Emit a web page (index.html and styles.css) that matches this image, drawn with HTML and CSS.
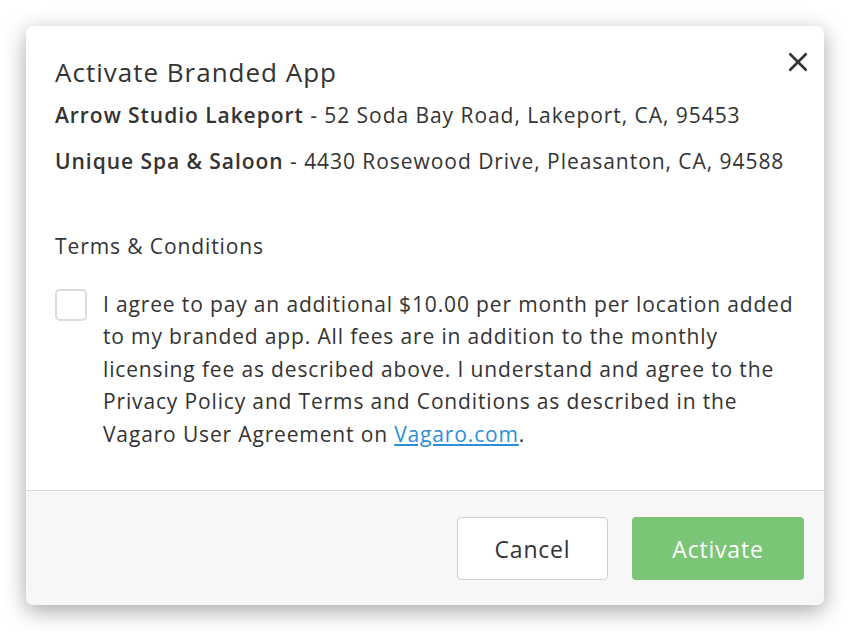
FILE: index.html
```html
<!DOCTYPE html>
<html>
<head>
<meta charset="utf-8">
<link rel="stylesheet" href="styles.css">
</head>
<body>
<div class="dialog">
  <div class="content">
    <div class="header">
      <h1 class="title">Activate Branded App</h1>
      <button class="close" aria-label="Close">
        <svg width="20" height="20" viewBox="0 0 20 20"><path d="M1.5 1.5 L18.5 18.5 M18.5 1.5 L1.5 18.5" stroke="#333" stroke-width="2.6" stroke-linecap="butt" fill="none"/></svg>
      </button>
    </div>
    <p class="loc"><b>Arrow Studio Lakeport</b> - 52 Soda Bay Road, Lakeport, CA, 95453</p>
    <p class="loc"><b>Unique Spa &amp; Saloon</b> - 4430 Rosewood Drive, Pleasanton, CA, 94588</p>
    <h2 class="terms">Terms &amp; Conditions</h2>
    <div class="agree">
      <span class="checkbox"></span>
      <p class="agree-text">I agree to pay an additional $10.00 per month per location added to my branded app. All fees are in addition to the monthly licensing fee as described above. I understand and agree to the Privacy Policy and Terms and Conditions as described in the Vagaro User Agreement on <a href="#">Vagaro.com</a>.</p>
    </div>
  </div>
  <div class="footer">
    <button class="btn btn-cancel">Cancel</button>
    <button class="btn btn-activate">Activate</button>
  </div>
</div>
</body>
</html>
```
FILE: styles.css
```css
html, body {
  margin: 0;
  padding: 0;
  background: #ffffff;
}
body {
  padding: 26px;
  font-family: "Open Sans", Lato, sans-serif;
  color: #333333;
}
.dialog {
  width: 798px;
  height: 579px;
  box-sizing: border-box;
  background: #ffffff;
  border-radius: 7px;
  box-shadow: 0 6px 22px rgba(0, 0, 0, 0.35);
  display: flex;
  flex-direction: column;
  overflow: hidden;
}
.content {
  flex: 1;
  padding: 28px 24px 0 29px;
}
.header {
  display: flex;
  justify-content: space-between;
  align-items: flex-start;
}
.title {
  margin: 0;
  font-size: 26px;
  font-weight: 400;
  letter-spacing: 1px;
  line-height: 36px;
  color: #333;
}
.close {
  border: 0;
  background: none;
  padding: 0;
  margin: -2px -8px 0 0;
  width: 20px;
  height: 20px;
  cursor: pointer;
}
.close svg { display: block; }
.loc {
  margin: 5px 0 0;
  font-size: 21px;
  letter-spacing: 0.95px;
  line-height: 40px;
  color: #333;
}
.loc b { font-weight: 600; }
.loc + .loc { margin-top: 6px; }
.terms {
  margin: 50px 0 0;
  font-size: 21px;
  font-weight: 400;
  letter-spacing: 0.9px;
  line-height: 30px;
  color: #333;
}
.agree {
  display: flex;
  gap: 16px;
  margin-top: 27px;
}
.checkbox {
  flex: none;
  width: 32px;
  height: 32px;
  box-sizing: border-box;
  border: 2px solid #dcdcdc;
  border-radius: 5px;
  margin-top: 1px;
}
.agree-text {
  margin: 0;
  font-size: 21px;
  letter-spacing: 0.85px;
  line-height: 32.4px;
  color: #333;
}
.agree-text a {
  color: #2c8fd8;
  text-decoration: underline;
}
.footer {
  flex: none;
  height: 115px;
  box-sizing: border-box;
  border-top: 1px solid #dadada;
  background: #f7f7f7;
  display: flex;
  justify-content: flex-end;
  align-items: flex-start;
  gap: 24px;
  padding: 26px 20px 0 0;
}
.btn {
  height: 63px;
  border-radius: 4px;
  font-family: "Open Sans", Lato, sans-serif;
  font-size: 23px;
  letter-spacing: 0.8px;
  cursor: pointer;
}
.btn-cancel {
  width: 151px;
  background: #ffffff;
  border: 1px solid #cfcfcf;
  color: #333;
}
.btn-activate {
  width: 172px;
  background: #7bc576;
  border: 0;
  color: #ffffff;
}
```
